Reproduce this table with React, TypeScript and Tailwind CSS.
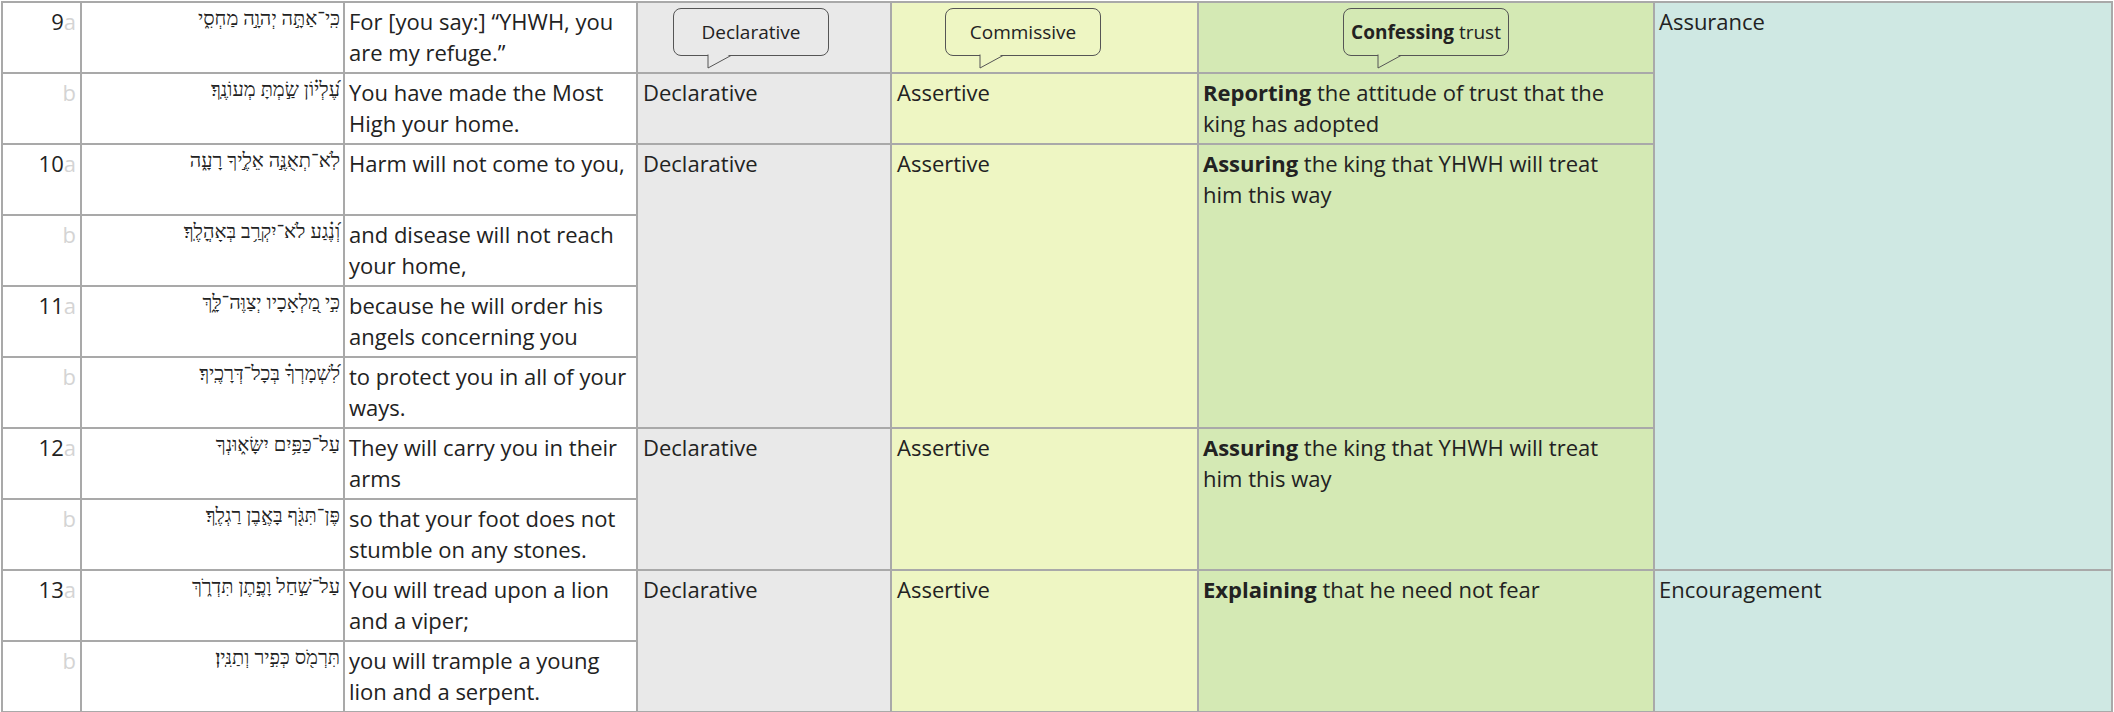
import React from "react";

type Row = {
  num?: string;
  letter: string;
  heb: string;
  en: string;
};

const rows: Row[] = [
  { num: "9", letter: "a", heb: "כִּֽי־אַתָּ֣ה יְהוָ֣ה מַחְסִ֑י", en: "For [you say:] “YHWH, you are my refuge.”" },
  { letter: "b", heb: "עֶ֝לְי֗וֹן שַׂ֣מְתָּ מְעוֹנֶֽךָ׃", en: "You have made the Most High your home." },
  { num: "10", letter: "a", heb: "לֹֽא־תְאֻנֶּ֣ה אֵלֶ֣יךָ רָעָ֑ה", en: "Harm will not come to you," },
  { letter: "b", heb: "וְ֝נֶ֗גַע לֹא־יִקְרַ֥ב בְּאָהֳלֶֽךָ׃", en: "and disease will not reach your home," },
  { num: "11", letter: "a", heb: "כִּ֣י מַ֭לְאָכָיו יְצַוֶּה־לָּ֑ךְ", en: "because he will order his angels concerning you" },
  { letter: "b", heb: "לִ֝שְׁמָרְךָ֗ בְּכָל־דְּרָכֶֽיךָ׃", en: "to protect you in all of your ways." },
  { num: "12", letter: "a", heb: "עַל־כַּפַּ֥יִם יִשָּׂא֑וּנְךָ", en: "They will carry you in their arms" },
  { letter: "b", heb: "פֶּן־תִּגֹּ֖ף בָּאֶ֣בֶן רַגְלֶֽךָ׃", en: "so that your foot does not stumble on any stones." },
  { num: "13", letter: "a", heb: "עַל־שַׁ֣חַל וָפֶ֣תֶן תִּדְרֹ֑ךְ", en: "You will tread upon a lion and a viper;" },
  { letter: "b", heb: "תִּרְמֹ֖ס כְּפִ֣יר וְתַנִּֽין׃", en: "you will trample a young lion and a serpent." },
];

function Bubble({
  children,
  width,
  ml,
  bg,
}: {
  children: React.ReactNode;
  width: string;
  ml: string;
  bg: string;
}) {
  return (
    <div className={`relative mt-[2px] h-[48px] ${width} ${ml}`}>
      <div className="flex h-full w-full items-center justify-center rounded-[8px] border border-[#555] text-[19px] leading-none text-[#222]">
        {children}
      </div>
      <svg
        className="absolute left-[34px] top-[46px]"
        width="26"
        height="15"
        viewBox="0 0 26 15"
      >
        <polygon points="1,0 1,14 24,0" fill={bg} />
        <polyline points="1,0.5 1,14 24,1.5" fill="none" stroke="#555" strokeWidth="1" />
      </svg>
    </div>
  );
}

const td = "border-2 border-[#a9a9a9] align-top p-0";
const gray = "bg-[#e9e9e9] pl-[5px] pr-[4px] pt-[3px]";
const yellow = "bg-[#eef6c3] pl-[5px] pr-[4px] pt-[3px]";
const green = "bg-[#d4e9b4] pl-[4px] pr-[18px] pt-[3px]";
const teal = "bg-[#cfe8e3] px-[4px] pt-[3px]";

export default function App() {
  return (
    <div className="bg-white w-[2114px] h-[712px] overflow-hidden font-['Open_Sans',sans-serif] text-[22px] leading-[31px] text-[#222]">
      <table className="ml-[1px] mt-[1px] table-fixed border-collapse">
        <colgroup>
          <col className="w-[79px]" />
          <col className="w-[263px]" />
          <col className="w-[293px]" />
          <col className="w-[254px]" />
          <col className="w-[307px]" />
          <col className="w-[456px]" />
          <col className="w-[458px]" />
        </colgroup>
        <tbody>
          {rows.map((r, i) => (
            <tr key={i} className="h-[71px]">
              <td className={`${td} pr-[4px] pt-[3px] text-right`}>
                {r.num && <span>{r.num}</span>}
                <span className="text-[#d4d4d4]">{r.letter}</span>
              </td>
              <td className={`${td} pr-[3px] pt-[3px]`}>
                <div
                  dir="rtl"
                  className="whitespace-nowrap text-right font-['Liberation_Serif','DejaVu_Sans',serif] text-[20px] leading-[24px] text-[#222]"
                >
                  {r.heb}
                </div>
              </td>
              <td className={`${td} pl-[4px] pr-[1px] pt-[3px]`}>{r.en}</td>
              {i === 0 && (
                <>
                  <td className={`${td} ${gray}`}>
                    <Bubble width="w-[156px]" ml="ml-[30px]" bg="#e9e9e9">
                      Declarative
                    </Bubble>
                  </td>
                  <td className={`${td} ${yellow}`}>
                    <Bubble width="w-[156px]" ml="ml-[48px]" bg="#eef6c3">
                      Commissive
                    </Bubble>
                  </td>
                  <td className={`${td} ${green}`}>
                    <Bubble width="w-[166px]" ml="ml-[140px]" bg="#d4e9b4">
                      <span className="font-bold">Confessing</span>
                      <span>&nbsp;trust</span>
                    </Bubble>
                  </td>
                  <td rowSpan={8} className={`${td} ${teal}`}>
                    Assurance
                  </td>
                </>
              )}
              {i === 1 && (
                <>
                  <td className={`${td} ${gray}`}>Declarative</td>
                  <td className={`${td} ${yellow}`}>Assertive</td>
                  <td className={`${td} ${green}`}>
                    <span className="font-bold">Reporting</span> the attitude of trust that the king has adopted
                  </td>
                </>
              )}
              {i === 2 && (
                <>
                  <td rowSpan={4} className={`${td} ${gray}`}>Declarative</td>
                  <td rowSpan={4} className={`${td} ${yellow}`}>Assertive</td>
                  <td rowSpan={4} className={`${td} ${green}`}>
                    <span className="font-bold">Assuring</span> the king that YHWH will treat him this way
                  </td>
                </>
              )}
              {i === 6 && (
                <>
                  <td rowSpan={2} className={`${td} ${gray}`}>Declarative</td>
                  <td rowSpan={2} className={`${td} ${yellow}`}>Assertive</td>
                  <td rowSpan={2} className={`${td} ${green}`}>
                    <span className="font-bold">Assuring</span> the king that YHWH will treat him this way
                  </td>
                </>
              )}
              {i === 8 && (
                <>
                  <td rowSpan={2} className={`${td} ${gray}`}>Declarative</td>
                  <td rowSpan={2} className={`${td} ${yellow}`}>Assertive</td>
                  <td rowSpan={2} className={`${td} ${green}`}>
                    <span className="font-bold">Explaining</span> that he need not fear
                  </td>
                  <td rowSpan={2} className={`${td} ${teal}`}>Encouragement</td>
                </>
              )}
            </tr>
          ))}
        </tbody>
      </table>
    </div>
  );
}
